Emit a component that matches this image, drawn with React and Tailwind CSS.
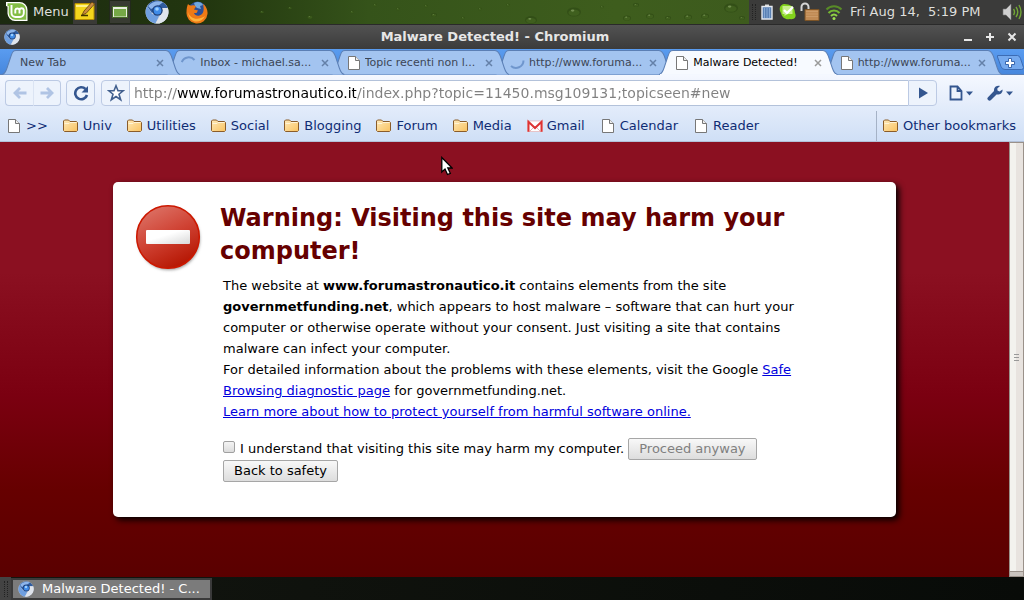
import React from "react";

const ChromiumIcon = ({ className }) => (
  <svg className={className} viewBox="0 0 24 24" aria-hidden="true">
    <circle cx="12" cy="12" r="11.5" fill="#c3cbd8" />
    <path d="M2.2 6.2A11.5 11.5 0 0 1 22.8 8L12.5 8 7 13z" fill="#2f5c9f" />
    <path d="M2.2 6.2A11.5 11.5 0 0 0 10.5 23.4L14 16 7 14z" fill="#6f9fe0" />
    <path d="M22.8 8A11.5 11.5 0 0 1 10.5 23.4L16.5 13 16 8z" fill="#dfe4ec" />
    <path d="M3 6C7 1.500 13 0 18 2.300L13 6 6 9z" fill="#8db5ea" />
    <circle cx="12.500" cy="10.500" r="5.200" fill="#1d3f78" />
    <circle cx="12.500" cy="10.500" r="3.900" fill="#3f8be8" />
    <circle cx="12" cy="9" r="1.800" fill="#9cd0ff" />
  </svg>
);

const PageIcon = () => (
  <svg className="w-4 h-4 shrink-0" viewBox="0 0 16 16" aria-hidden="true">
    <path d="M2.500 1.500h7l4 4v9h-11z" fill="#fff" stroke="#777" />
    <path d="M9.500 1.500v4h4" fill="#eee" stroke="#777" />
  </svg>
);

const FolderIcon = () => (
  <svg className="w-4 h-4 shrink-0" viewBox="0 0 16 16" aria-hidden="true">
    <defs>
      <linearGradient id="folder" x1="0" y1="0" x2="1" y2="1">
        <stop offset="0" stopColor="#ffe9b8" />
        <stop offset="1" stopColor="#f9c260" />
      </linearGradient>
    </defs>
    <path
      d="M.5 12.500v-9.500l1-1h4l1.500 1.500h6.500l1 1v8l-1 1h-12z"
      fill="url(#folder)"
      stroke="#8a5c2a"
    />
    <path d="M1.500 5.500h4.500l1-1h6.500" fill="none" stroke="#fff3d6" />
  </svg>
);

const GmailIcon = () => (
  <svg className="w-4 h-4 shrink-0" viewBox="0 0 16 16" aria-hidden="true">
    <path d="M.5 3h15v10.500H.5z" fill="#fff" stroke="#e5a5a5" strokeWidth=".6" />
    <path d="M3 13l5-5 5 5" fill="none" stroke="#e9b3b3" />
    <path d="M1.500 13.800V3.800L8 10l6.500-6.200v10" fill="none" stroke="#dd3333" strokeWidth="2" />
  </svg>
);

const Spinner = ({ low }) => (
  <svg className="w-4 h-4 shrink-0" viewBox="0 0 16 16" aria-hidden="true">
    <path
      d={low ? "M1 11a7.500 7.500 0 0 0 12.500-5.500" : "M.8 7A7.500 7.500 0 0 1 13.500 5"}
      fill="none"
      stroke="#6f96cd"
      strokeWidth="2"
    />
  </svg>
);

const tabs = [
  { title: "New Tab", z: "z-[6]" },
  { title: "Inbox - michael.sa...", icon: <Spinner />, z: "z-[5]" },
  { title: "Topic recenti non l...", icon: <PageIcon />, z: "z-[4]" },
  { title: "http://www.foruma...", icon: <Spinner low />, z: "z-[3]" },
  { title: "Malware Detected!", icon: <PageIcon />, z: "z-[7]", active: true },
  { title: "http://www.foruma...", icon: <PageIcon />, z: "z-[1]" },
];

const bookmarks = [
  { label: ">>", icon: <PageIcon /> },
  { label: "Univ", icon: <FolderIcon /> },
  { label: "Utilities", icon: <FolderIcon /> },
  { label: "Social", icon: <FolderIcon /> },
  { label: "Blogging", icon: <FolderIcon /> },
  { label: "Forum", icon: <FolderIcon /> },
  { label: "Media", icon: <FolderIcon /> },
  { label: "Gmail", icon: <GmailIcon /> },
  { label: "Calendar", icon: <PageIcon /> },
  { label: "Reader", icon: <PageIcon /> },
];

// x, y, radius of the water drops on the panel wallpaper
const drops = [
  [352, 12, 2], [375, 5, 2], [398, 9, 2], [426, 6, 2], [434, 15, 3], [463, 18, 2],
  [480, 9, 2], [508, 5, 2], [531, 20, 6], [574, 12, 7], [602, 7, 2], [627, 18, 4],
  [636, 5, 3], [650, 16, 4], [668, 18, 3], [688, 17, 4], [705, 16, 4], [731, 8, 7],
  [742, 18, 3], [290, 8, 2], [310, 17, 3], [262, 12, 2],
];

const TopPanel = () => (
  <header className="relative flex items-center justify-between h-6 shrink-0 bg-[linear-gradient(90deg,#1c2a10_0%,#22360f_20%,#35531a_36%,#3e5d1d_60%,#3c571f_100%)] text-[13px] text-[#dfdfdc]">
    <svg className="absolute left-0 top-0 w-[1024px] h-6" viewBox="0 0 1024 24" aria-hidden="true">
      {drops.map(([x, y, r]) => (
        <g key={`${x}-${y}`} opacity="0.7">
          <ellipse cx={x} cy={y} rx={r} ry={r * 0.65} fill="#2f4a15" />
          <ellipse cx={x} cy={y + r * 0.1} rx={r * 0.8} ry={r * 0.45} fill="#41611f" />
          <ellipse cx={x - r * 0.2} cy={y - r * 0.2} rx={r * 0.25} ry={r * 0.15} fill="#8aa566" />
        </g>
      ))}
    </svg>
    <nav className="relative flex items-center h-full">
      <button className="flex items-center gap-[3px] pl-[6px] pr-1 h-full">
        <svg className="w-6 h-6" viewBox="0 0 24 24" aria-hidden="true">
          <path d="M0 2h13.500a8 8 0 0 1 8 8v11H9A8 8 0 0 1 1.500 13.500V6.500L0 6z" fill="#fff" />
          <path d="M1.500 3.200h12a7 7 0 0 1 6.800 7v9.600H9.500a7 7 0 0 1-6.800-6.800V6H1.500z" fill="#83bd45" />
          <path
            d="M5.500 5V13a4 4 0 0 0 4 4H14a4 4 0 0 0 3.800-4v-3a2.200 2.200 0 0 0-4.300 0v3.500m0-3.500a2.200 2.200 0 0 0-4.200 0v3.500"
            fill="none"
            stroke="#fff"
            strokeWidth="1.900"
          />
        </svg>
        Menu
      </button>
      <button aria-label="Notes" className="w-6 h-full flex items-center justify-center bg-[#3a3a36]">
        <svg className="w-6 h-6" viewBox="0 0 24 24" aria-hidden="true">
          <path d="M2 3.500h19v16H2z" fill="#f3d51c" stroke="#b58e00" />
          <path d="M3 5h17v2H3z" fill="#fff08a" />
          <path d="M9 15l2-4L19 2l2.500 2-8.500 9.500z" fill="#c98b3e" stroke="#5c4008" strokeWidth=".8" />
          <path d="M8 15.500h7" stroke="#413500" strokeWidth="1.500" />
        </svg>
      </button>
      <button aria-label="Show desktop" className="ml-3 w-[22px] h-full flex items-center justify-center bg-[#383b32] border border-[#22291b]">
        <svg className="w-4 h-3" viewBox="0 0 16 12" aria-hidden="true">
          <path d="M.5.5h15v11H.5z" fill="#e8eedf" stroke="#456b26" />
          <path d="M2 3h12v7.500H2z" fill="#75a846" />
        </svg>
      </button>
      <button aria-label="Chromium" className="ml-[14px]">
        <ChromiumIcon className="w-6 h-6" />
      </button>
      <button aria-label="Firefox" className="ml-4">
        <svg className="w-6 h-6" viewBox="0 0 24 24" aria-hidden="true">
          <circle cx="12.500" cy="10.500" r="9" fill="#2c4f96" />
          <path d="M9 3c4-2 8-.5 9 2l-3 1 1 3-4-1-2-2z" fill="#71a8df" />
          <path
            d="M3 4c1 1 2 1.500 4 1.500 1.500-.5 3 0 4 1L9 9.500l4 1-1.500 2.500H9c1 3 5 4 8 1 2-2 2-6 1-10 3 2 5 6 4.500 10A10.500 10.500 0 0 1 1.500 12C1.500 9 2 6 3 4z"
            fill="#ee7a16"
          />
          <path d="M3 12c2 7 10 9 17 4-4 8-16 8-17-4z" fill="#ffb33b" />
        </svg>
      </button>
    </nav>
    <div className="relative flex items-center h-full w-[275px] bg-[#3b3b3a]">
      <span className="ml-[3px] w-1 h-4 border-x border-dotted border-[#222]" />
      <div className="flex items-center gap-px ml-px">
        <svg className="w-5 h-5" viewBox="0 0 20 20" aria-hidden="true">
          <path d="M8 2.500h4v2H8z" fill="#ddd" />
          <path d="M5 4.500h10v12.500H5z" fill="#5a80b4" stroke="#e5e9ef" strokeWidth="1.400" />
          <path d="M7.500 6v10M10 6v10M12.500 6v10" stroke="#86a8d3" />
        </svg>
        <svg className="w-5 h-5" viewBox="0 0 20 20" aria-hidden="true">
          <path d="M6 2C1 3 1 8 3 11c1 5 5 7 9 6 4 1 7-2 5-6 0-6-5-9-11-9z" fill="#83d31c" />
          <path d="M4.500 4h10v8h-5l-3 2v-2h-2z" fill="#c9f08e" />
          <path d="M6 8l3 3 6-6" fill="none" stroke="#fff" strokeWidth="2.200" />
        </svg>
        <svg className="w-6 h-5" viewBox="0 0 24 20" aria-hidden="true">
          <path d="M2.500 9V5a3.500 3.500 0 0 1 7 0v3" fill="none" stroke="#d5d5d5" strokeWidth="2" />
          <path d="M6 7.500h14v11H6z" fill="#c08a54" stroke="#7c5427" />
          <path d="M7 9.500h12M7 12h12M7 14.500h12" stroke="#d1a271" strokeWidth=".7" />
        </svg>
        <svg className="w-5 h-5" viewBox="0 0 20 20" fill="none" strokeWidth="2" aria-hidden="true">
          <path d="M2.500 7.500c4-4.500 11-4.500 15 0" stroke="#588b27" />
          <path d="M4.500 11c3-3.500 8-3.500 11 0" stroke="#75b632" />
          <path d="M7 14c2-2 4-2 6 0" stroke="#8fd344" />
          <circle cx="10" cy="16.500" r="1.500" fill="#9fe14f" />
        </svg>
      </div>
      <time className="ml-[6px] whitespace-pre">Fri Aug 14,  5:19 PM</time>
      <svg className="ml-auto mr-[2px] w-5 h-5" viewBox="0 0 20 20" aria-hidden="true">
        <path d="M1 7h3l5-5v16l-5-5H1z" fill="#cfcfcf" stroke="#777" strokeWidth=".6" />
        <path d="M11.500 7q2 3 0 6M14 5q3.500 5 0 10M17 3q4 7 0 14" fill="none" stroke="#72a536" strokeWidth="1.400" />
      </svg>
    </div>
  </header>
);

const Tab = ({ tab }) => (
  <div className={`relative flex items-center gap-[3px] flex-1 min-w-0 h-[26px] -mr-[14px] pt-[2px] pl-[15px] pr-[13px] ${tab.z}`}>
    <svg
      className="absolute inset-0 w-full h-full"
      viewBox="0 0 178 26"
      preserveAspectRatio="none"
      aria-hidden="true"
    >
      <path
        d="M0 25.500C3 25 4 22 5 19L9 7C10.500 3 11 1.500 14 1.500H163C166 1.500 167.500 3 169 7L173 19C174 22 175 25 178 25.500"
        fill={tab.active ? "#f7faff" : "#a3c4f0"}
        stroke="#5b7fb5"
      />
      {tab.active ? <path d="M1 25.500H177" stroke="#f4f8ff" /> : null}
    </svg>
    {tab.icon ? <span className="relative">{tab.icon}</span> : null}
    <button
      role="tab"
      aria-selected={Boolean(tab.active)}
      className={`relative flex-1 min-w-0 truncate text-left text-[11px] ${tab.icon ? "" : "pl-[3px]"} ${tab.active ? "text-black" : "text-[#3c4656]"}`}
    >
      {tab.title}
    </button>
    <button aria-label="Close tab" className="relative">
      <svg className="w-[14px] h-3" viewBox="0 0 14 12" aria-hidden="true">
        <path
          d="M4 3l6 6M10 3l-6 6"
          stroke={tab.active ? "#9a9a9a" : "#6480a8"}
          strokeWidth="1.500"
        />
      </svg>
    </button>
  </div>
);

const TabStrip = () => (
  <div className="flex h-[26px] shrink-0 pl-[2px] bg-[linear-gradient(#5a9cf0,#4787dd)] border-b border-[#5b7fb5]">
    <div role="tablist" className="flex flex-1 min-w-0 pr-[14px]">
      {tabs.map((tab, i) => (
        <Tab key={i} tab={tab} />
      ))}
    </div>
    <button aria-label="New tab" className="w-7 shrink-0 -ml-[6px]">
      <svg className="w-7 h-[26px]" viewBox="0 0 28 26" aria-hidden="true">
        <path d="M1.500 6.500h20q2 0 3 3l3 9q0 2-2 2H9q-3 0-4-3L1.500 8z" fill="#75a9ee" stroke="#3c6cb5" />
        <path d="M9.500 12.500h3v-3h3v3h3v3h-3v3h-3v-3h-3z" fill="#fff" stroke="#3a67ad" />
      </svg>
    </button>
  </div>
);

const toolButton = "flex items-center justify-center h-[26px] rounded border border-[#bccae4] bg-[#edf3fc]";

const Toolbar = () => (
  <div className="flex items-center h-9 shrink-0 pl-[5px] pr-[10px] text-[14px]">
    <div className="flex">
      <button aria-label="Back" className={`${toolButton} w-7 rounded-r-none border-r-0`}>
        <svg className="w-4 h-4" viewBox="0 0 16 16" aria-hidden="true">
          <path d="M14.500 8H4M8 3L3 8l5 5" fill="none" stroke="#b0c4e4" strokeWidth="2.800" />
        </svg>
      </button>
      <button aria-label="Forward" className={`${toolButton} w-7 rounded-l-none border-l-[#dbe4f3]`}>
        <svg className="w-4 h-4" viewBox="0 0 16 16" aria-hidden="true">
          <path d="M1.500 8H12M8 3l5 5-5 5" fill="none" stroke="#b0c4e4" strokeWidth="2.800" />
        </svg>
      </button>
    </div>
    <button aria-label="Reload" className={`${toolButton} w-[29px] ml-[5px]`}>
      <svg className="w-4 h-4" viewBox="0 0 16 16" aria-hidden="true">
        <path d="M12.500 4A6 6 0 1 0 14 10" fill="none" stroke="#34568f" strokeWidth="2.600" />
        <path d="M15 1v6.500H8.500z" fill="#34568f" />
      </svg>
    </button>
    <form className="flex flex-1 min-w-0 ml-[6px]" onSubmit={(e) => e.preventDefault()}>
      <button type="button" aria-label="Bookmark this page" className={`${toolButton} w-[29px] rounded-r-none`}>
        <svg className="w-[18px] h-[18px]" viewBox="0 0 18 18" aria-hidden="true">
          <path
            d="M9 1.800l2 5h5.200l-4.200 3.400 1.700 5.500L9 12.500l-4.700 3.200L6 10.200 1.800 6.800H7z"
            fill="#fff"
            stroke="#42608f"
            strokeWidth="1.600"
          />
        </svg>
      </button>
      <div className="flex flex-1 min-w-0 bg-white border-y border-[#b3c2da]">
        <input
          aria-label="Address"
          defaultValue="http://www.forumastronautico.it/index.php?topic=11450.msg109131;topicseen#new"
          className="w-full h-6 pl-1 outline-none text-transparent caret-black bg-clip-text bg-[linear-gradient(90deg,#808080_47px,#000_47px,#000_226px,#808080_226px)]"
        />
      </div>
      <button aria-label="Go" className={`${toolButton} w-[29px] rounded-l-none`}>
        <svg className="w-3 h-3" viewBox="0 0 12 12" aria-hidden="true">
          <path d="M2 .5l9 5.500-9 5.500z" fill="#34568f" />
        </svg>
      </button>
    </form>
    <button aria-label="Page menu" className="flex items-center gap-[2px] ml-3">
      <svg className="w-[14px] h-4" viewBox="0 0 14 16" aria-hidden="true">
        <path d="M1.500 1.500h7l4 4.500v8.500h-11z M8.500 1.500V6h4" fill="#edf3fc" stroke="#34568f" strokeWidth="1.800" />
      </svg>
      <svg className="w-[9px] h-2" viewBox="0 0 9 8" aria-hidden="true">
        <path d="M1 2.500h7L4.500 6.500z" fill="#34568f" />
      </svg>
    </button>
    <button aria-label="Tools menu" className="flex items-center gap-[2px] ml-[13px]">
      <svg className="w-4 h-4" viewBox="0 0 16 16" aria-hidden="true">
        <path d="M15.500 4.500L12.500 6.500 10.500 5.500 10.300 3.500 13 1C10 .3 6.500 2 7 6L1 12.200A2 2 0 0 0 4 15L9.500 9.500C13 10 16 8 15.500 4.500z" fill="#34568f" />
      </svg>
      <svg className="w-[9px] h-2" viewBox="0 0 9 8" aria-hidden="true">
        <path d="M1 2.500h7L4.500 6.500z" fill="#34568f" />
      </svg>
    </button>
  </div>
);

const BookmarkBar = () => (
  <nav className="flex items-center justify-between h-[30px] shrink-0 pl-[6px] pr-2 text-[13px] text-[#0f2c74]">
    <div className="flex gap-[15px]">
      {bookmarks.map(({ label, icon }) => (
        <a key={label} href="#" className="flex items-center gap-1 whitespace-nowrap">
          {icon}
          {label}
        </a>
      ))}
    </div>
    <a href="#" className="flex items-center gap-1 h-full pl-[6px] border-l border-[#a5b2c6] whitespace-nowrap">
      <FolderIcon />
      Other bookmarks
    </a>
  </nav>
);

const pageButton =
  "h-[22px] px-[10px] rounded-[2px] border border-[#a6a6a6] bg-[linear-gradient(#f8f8f8,#dddddd)] leading-5";

const WarningCard = () => (
  <section className="flex mx-[113px] mt-10 pt-5 pb-[35px] pl-5 rounded-[5px] bg-white shadow-[3px_3px_6px_#000]">
    <svg className="w-[70px] h-[74px] shrink-0" viewBox="0 0 70 74" aria-hidden="true">
      <defs>
        <linearGradient id="stop" x1="0.2" y1="0" x2="0.7" y2="1">
          <stop offset="0" stopColor="#dd7468" />
          <stop offset="0.5" stopColor="#cf4132" />
          <stop offset="1" stopColor="#b41400" />
        </linearGradient>
        <linearGradient id="bar" x1="0" y1="0" x2="1" y2="1">
          <stop offset="0.4" stopColor="#fff" />
          <stop offset="1" stopColor="#d8d8d8" />
        </linearGradient>
        <filter id="soft">
          <feGaussianBlur stdDeviation="1.500" />
        </filter>
      </defs>
      <circle cx="36" cy="37" r="31" fill="#999" filter="url(#soft)" />
      <circle cx="35" cy="35" r="31.300" fill="url(#stop)" stroke="#cc1800" strokeWidth="1.500" />
      <rect x="13" y="28" width="44" height="14" rx="1" fill="url(#bar)" />
    </svg>
    <div className="flex-1 pl-[17px] pr-[90px] text-[13px] leading-[21px] text-black">
      <h1 className="mb-[7px] text-[24px] leading-[33px] font-bold text-[#660000]">
        Warning: Visiting this site may harm your computer!
      </h1>
      <div className="pl-[3px]">
        <p>
          The website at <b>www.forumastronautico.it</b> contains elements from the site{" "}
          <b>governmetfunding.net</b>, which appears to host malware – software that can hurt your
          computer or otherwise operate without your consent. Just visiting a site that contains
          malware can infect your computer.
        </p>
        <p>
          For detailed information about the problems with these elements, visit the Google{" "}
          <a href="#" className="text-[#0000dd] underline">Safe Browsing diagnostic page</a> for
          governmetfunding.net.
        </p>
        <p>
          <a href="#" className="text-[#0000dd] underline">
            Learn more about how to protect yourself from harmful software online.
          </a>
        </p>
        <div className="flex items-start mt-4">
          <input
            id="understand"
            type="checkbox"
            className="appearance-none w-3 h-3 mt-[3px] mr-[5px] rounded-[2px] border border-[#a0a0a0] bg-[linear-gradient(#f4f4f4,#dcdcdc)] checked:bg-[#666]"
          />
          <label htmlFor="understand">I understand that visiting this site may harm my computer.</label>
          <button disabled className={`${pageButton} ml-1 text-[#808080]`}>
            Proceed anyway
          </button>
        </div>
        <button className={`${pageButton} block`}>Back to safety</button>
      </div>
    </div>
  </section>
);

const App = () => {
  return (
    <div className="relative flex flex-col h-screen overflow-hidden bg-[#0a0d08] font-[DejaVu_Sans,sans-serif]">
      <TopPanel />
      <div className="relative flex items-center justify-center h-[25px] shrink-0 bg-[linear-gradient(#525252,#3b3b3b)] border-t border-[#2a2a2a] text-[13px] font-bold text-[#e6e6e6]">
        <ChromiumIcon className="absolute left-1 w-4 h-4" />
        <h2 className="pr-[34px]">Malware Detected! - Chromium</h2>
        <div className="absolute right-[6px] flex items-center gap-[10px]">
          <button aria-label="Minimize">
            <svg className="block w-3 h-3" viewBox="0 0 12 12"><path d="M2 9h8" stroke="#e8e8e8" strokeWidth="2" /></svg>
          </button>
          <button aria-label="Maximize">
            <svg className="block w-3 h-3" viewBox="0 0 12 12"><path d="M2 6h8M6 2v8" stroke="#e8e8e8" strokeWidth="2" /></svg>
          </button>
          <button aria-label="Close">
            <svg className="block w-3 h-3" viewBox="0 0 12 12"><path d="M2.500 2.500l7 7M9.500 2.500l-7 7" stroke="#e8e8e8" strokeWidth="2" /></svg>
          </button>
        </div>
      </div>
      <TabStrip />
      <div className="shrink-0 bg-[linear-gradient(#f5f8ff,#cfdff6)] border-b border-[#b3c1d8]">
        <Toolbar />
        <BookmarkBar />
      </div>

      <div className="flex flex-1 min-h-0">
        <main className="flex-1 min-w-0 bg-[linear-gradient(#8b1021_0%,#8b1021_30%,#7b0011_58%,#660000_80%,#5a0000_100%)]">
          <WarningCard />
        </main>
        <div className="flex flex-col w-[15px] border border-[#9a918a] bg-[#e9e4e0]">
          <div className="flex flex-1 items-center justify-center bg-[linear-gradient(90deg,#f3f2ee_50%,#e8e3df_50%)] border-b border-[#9a918a]">
            <span className="w-[5px] h-[7px] border-y border-[#999] bg-[linear-gradient(transparent_2px,#999_2px,#999_3px,transparent_3px)]" />
          </div>
          <div className="h-1 bg-[#c9c3be]" />
        </div>
      </div>

      <footer className="flex items-center h-[23px] shrink-0 bg-[linear-gradient(90deg,#12150f,#080b08)] text-[13px]">
        <div className="flex items-center justify-center w-[11px] h-full bg-[#434343]">
          <span className="w-1 h-4 border-x border-dotted border-[#222]" />
        </div>
        <button className="flex items-center gap-2 h-[22px] w-[201px] pl-[5px] bg-[#7b7b7b] border-2 border-[#3a3a3a] text-white">
          <ChromiumIcon className="w-4 h-4 shrink-0" />
          <span className="whitespace-nowrap">Malware Detected! - C...</span>
        </button>
      </footer>

      {/* Mouse pointer */}
      <svg className="absolute left-[441px] top-[156px] w-3 h-5" viewBox="0 0 12 20" aria-hidden="true">
        <path d="M.8 1.500v14.500l3.200-3 2.500 5.500 2.800-1.200-2.500-5.300h4.300z" fill="#fff" stroke="#000" strokeWidth="1.300" />
      </svg>
    </div>
  );
};

export default App;
